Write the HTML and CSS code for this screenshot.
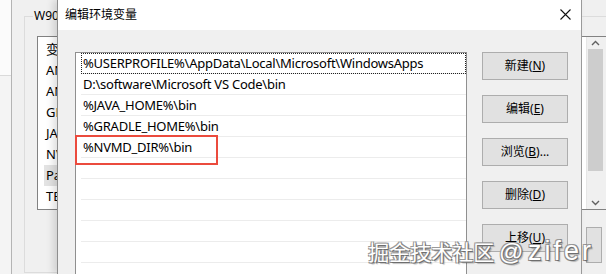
FILE: index.html
```html
<!DOCTYPE html>
<html>
<head>
    <meta charset="UTF-8">
    <title>编辑环境变量</title>
    <link rel="stylesheet" href="styles.css">
</head>
<body>
<div class="screen">
    <!-- 后面的“环境变量”窗口，左边露出的部分 -->
    <div class="back-left">
        <div class="edge"><div class="edge-top"></div></div>
        <div class="back-pane">
            <fieldset class="group">
                <legend>W90 的用户变量(U)</legend>
                <ul class="var-list">
                    <li>变量</li>
                    <li>ANDROID_HOME</li>
                    <li>ANDROID_SDK_ROOT</li>
                    <li>GRADLE_HOME</li>
                    <li>JAVA_HOME</li>
                    <li>NVMD_DIR</li>
                    <li class="sel">Path</li>
                    <li>TEMP</li>
                </ul>
            </fieldset>
        </div>
    </div>

    <div class="dialog">
        <div class="titlebar">
            <span class="title">编辑环境变量</span>
            <svg class="close" width="11" height="11" viewBox="0 0 11 11">
                <path d="M0.5 0.5 L10.5 10.5 M10.5 0.5 L0.5 10.5" stroke="#111" stroke-width="1.1" fill="none"/>
            </svg>
        </div>
        <div class="dialog-body">
            <div class="path-list">
                <div class="row focus">%USERPROFILE%\AppData\Local\Microsoft\WindowsApps</div>
                <div class="row">D:\software\Microsoft VS Code\bin</div>
                <div class="row">%JAVA_HOME%\bin</div>
                <div class="row">%GRADLE_HOME%\bin</div>
                <div class="row">%NVMD_DIR%\bin</div>
                <div class="row"></div>
                <div class="row"></div>
                <div class="row"></div>
                <div class="row"></div>
                <div class="row"></div>
                <div class="mark"></div>
            </div>
            <div class="actions">
                <div class="btn">新建(<u>N</u>)</div>
                <div class="btn">编辑(<u>E</u>)</div>
                <div class="btn">浏览(<u>B</u>)...</div>
                <div class="btn">删除(<u>D</u>)</div>
                <div class="btn">上移(<u>U</u>)</div>
            </div>
        </div>
    </div>

    <!-- 后面窗口右边露出的部分 -->
    <div class="back-right">
        <div class="group-r">
            <div class="list-r">
                <div class="list-r-gap"></div>
                <div class="scrollbar">
                    <div class="sb-btn">
                        <svg width="9" height="6" viewBox="0 0 9 6"><path d="M1 5 L4.5 1.5 L8 5" stroke="#606060" stroke-width="1.4" fill="none"/></svg>
                    </div>
                    <div class="sb-track"><div class="sb-thumb"></div></div>
                    <div class="sb-btn">
                        <svg width="9" height="6" viewBox="0 0 9 6"><path d="M1 1 L4.5 4.5 L8 1" stroke="#606060" stroke-width="1.4" fill="none"/></svg>
                    </div>
                </div>
            </div>
            <div class="btn-r"></div>
        </div>
    </div>

    <div class="watermark">掘金技术社区 <span class="wm-at">@</span> <span class="wm-user">zifer</span></div>
</div>
</body>
</html>
```

FILE: styles.css
```css
body {
    margin: 0;
    font-family: "Noto Sans", "Noto Sans CJK SC", sans-serif;
    font-size: 12px;
    color: #000;
}

.screen {
    position: relative;
    display: flex;
    width: 606px;
    height: 274px;
    overflow: hidden;
    background: #f0f0f0;
}

/* 左边 */
.back-left {
    display: flex;
    flex-shrink: 0;
    width: 57px;
    overflow: hidden;
}

.edge {
    flex-shrink: 0;
    width: 11px;
    background: #f4f4f4;
    border-right: 1px solid #b4b4b4;
}

.edge-top {
    height: 75px;
    background: #fbfbfb;
    border-bottom: 1px solid #dadada;
}

.back-pane {
    flex-shrink: 0;
    padding: 8px 0 0 12px;
}

.group {
    box-sizing: border-box;
    width: 560px;
    height: 265px;
    margin: 0;
    padding: 12px 8px 0 8px;
    border: 1px solid #dcdcdc;
}

.group legend {
    padding: 0 1px;
    line-height: 16px;
    font-size: 12px;
    white-space: nowrap;
}

.var-list {
    list-style: none;
    margin: 0 0 0 4px;
    padding: 2px 0;
    background: #fff;
    border: 1px solid #828282;
}

.var-list li {
    height: 21px;
    line-height: 21px;
    margin-left: 6px;
    padding-left: 2px;
    font-size: 13px;
    white-space: nowrap;
}

.var-list li.sel {
    background: #e3e3e3;
}

/* 编辑环境变量 对话框 */
.dialog {
    flex-shrink: 0;
    display: flex;
    flex-direction: column;
    width: 525px;
    box-sizing: border-box;
    border-left: 1px solid #8e8e8e;
    border-right: 1px solid #9a9a9a;
    background: #f0f0f0;
    box-shadow: -4px 0 7px rgba(0, 0, 0, 0.13);
}

.titlebar {
    display: flex;
    justify-content: space-between;
    align-items: center;
    height: 30px;
    padding: 0 10px 0 7px;
    background: #fff;
}

.title {
    font-size: 12px;
    line-height: 16px;
}

.close {
    margin-bottom: 1px;
}

.dialog-body {
    display: flex;
    gap: 15px;
    flex: 1;
    padding: 22px 13px 0 17px;
}

.path-list {
    position: relative;
    width: 392px;
    box-sizing: border-box;
    flex-shrink: 0;
    background: #fff;
    border: 1px solid #8f8f8f;
    border-bottom: none;
}

.row {
    box-sizing: border-box;
    height: 21px;
    margin-left: 5px;
    padding-left: 2px;
    line-height: 20px;
    font-size: 13px;
    letter-spacing: -0.25px;
    border-bottom: 1px solid #ececec;
    white-space: nowrap;
}

.row.focus {
    outline: 1px dotted #222;
    outline-offset: -1px;
}

.mark {
    position: absolute;
    left: -1px;
    top: 82px;
    width: 143px;
    height: 30px;
    box-sizing: border-box;
    border: 2px solid #eb4b3d;
}

.actions {
    display: flex;
    flex-direction: column;
    gap: 15px;
}

.btn {
    box-sizing: border-box;
    width: 86px;
    height: 28px;
    line-height: 26px;
    text-align: center;
    font-size: 12px;
    background: #e1e1e1;
    border: 1px solid #adadad;
    white-space: nowrap;
}

/* 右边 */
.back-right {
    flex-shrink: 0;
    width: 24px;
    padding-top: 16px;
    overflow: hidden;
}

.group-r {
    border-top: 1px solid #dcdcdc;
    padding-top: 19px;
}

.list-r {
    display: flex;
    height: 174px;
    box-sizing: border-box;
    border-top: 1px solid #828282;
    border-bottom: 1px solid #828282;
}

.list-r-gap {
    width: 4px;
    background: #fff;
}

.scrollbar {
    display: flex;
    flex-direction: column;
    width: 17px;
    background: #f0f0f0;
    border-left: 1px solid #e6e6e6;
}

.sb-btn {
    display: flex;
    align-items: center;
    justify-content: center;
    height: 17px;
}

.sb-track {
    flex: 1;
    padding: 0 1px 26px 1px;
}

.sb-thumb {
    height: 122px;
    background: #cdcdcd;
}

.btn-r {
    width: 16px;
    height: 36px;
    margin: 17px 0 0 4px;
    box-sizing: border-box;
    background: #e1e1e1;
    border: 1px solid #adadad;
}

/* 水印 */
.watermark {
    position: absolute;
    right: 12px;
    bottom: 8px;
    font-family: "Noto Sans CJK SC", sans-serif;
    font-size: 21px;
    line-height: 28px;
    color: #fff;
    white-space: nowrap;
    text-shadow: 1px 1px 0 #6e6e6e, -1px -1px 0 #9a9a9a, 1px -1px 0 #8a8a8a, -1px 1px 0 #8a8a8a, 2px 2px 1px rgba(0, 0, 0, 0.25);
}

.wm-at {
    font-family: "Liberation Sans", sans-serif;
    font-size: 24px;
}

.wm-user {
    font-family: "Liberation Sans", sans-serif;
    font-size: 27px;
    letter-spacing: 3px;
}
```
